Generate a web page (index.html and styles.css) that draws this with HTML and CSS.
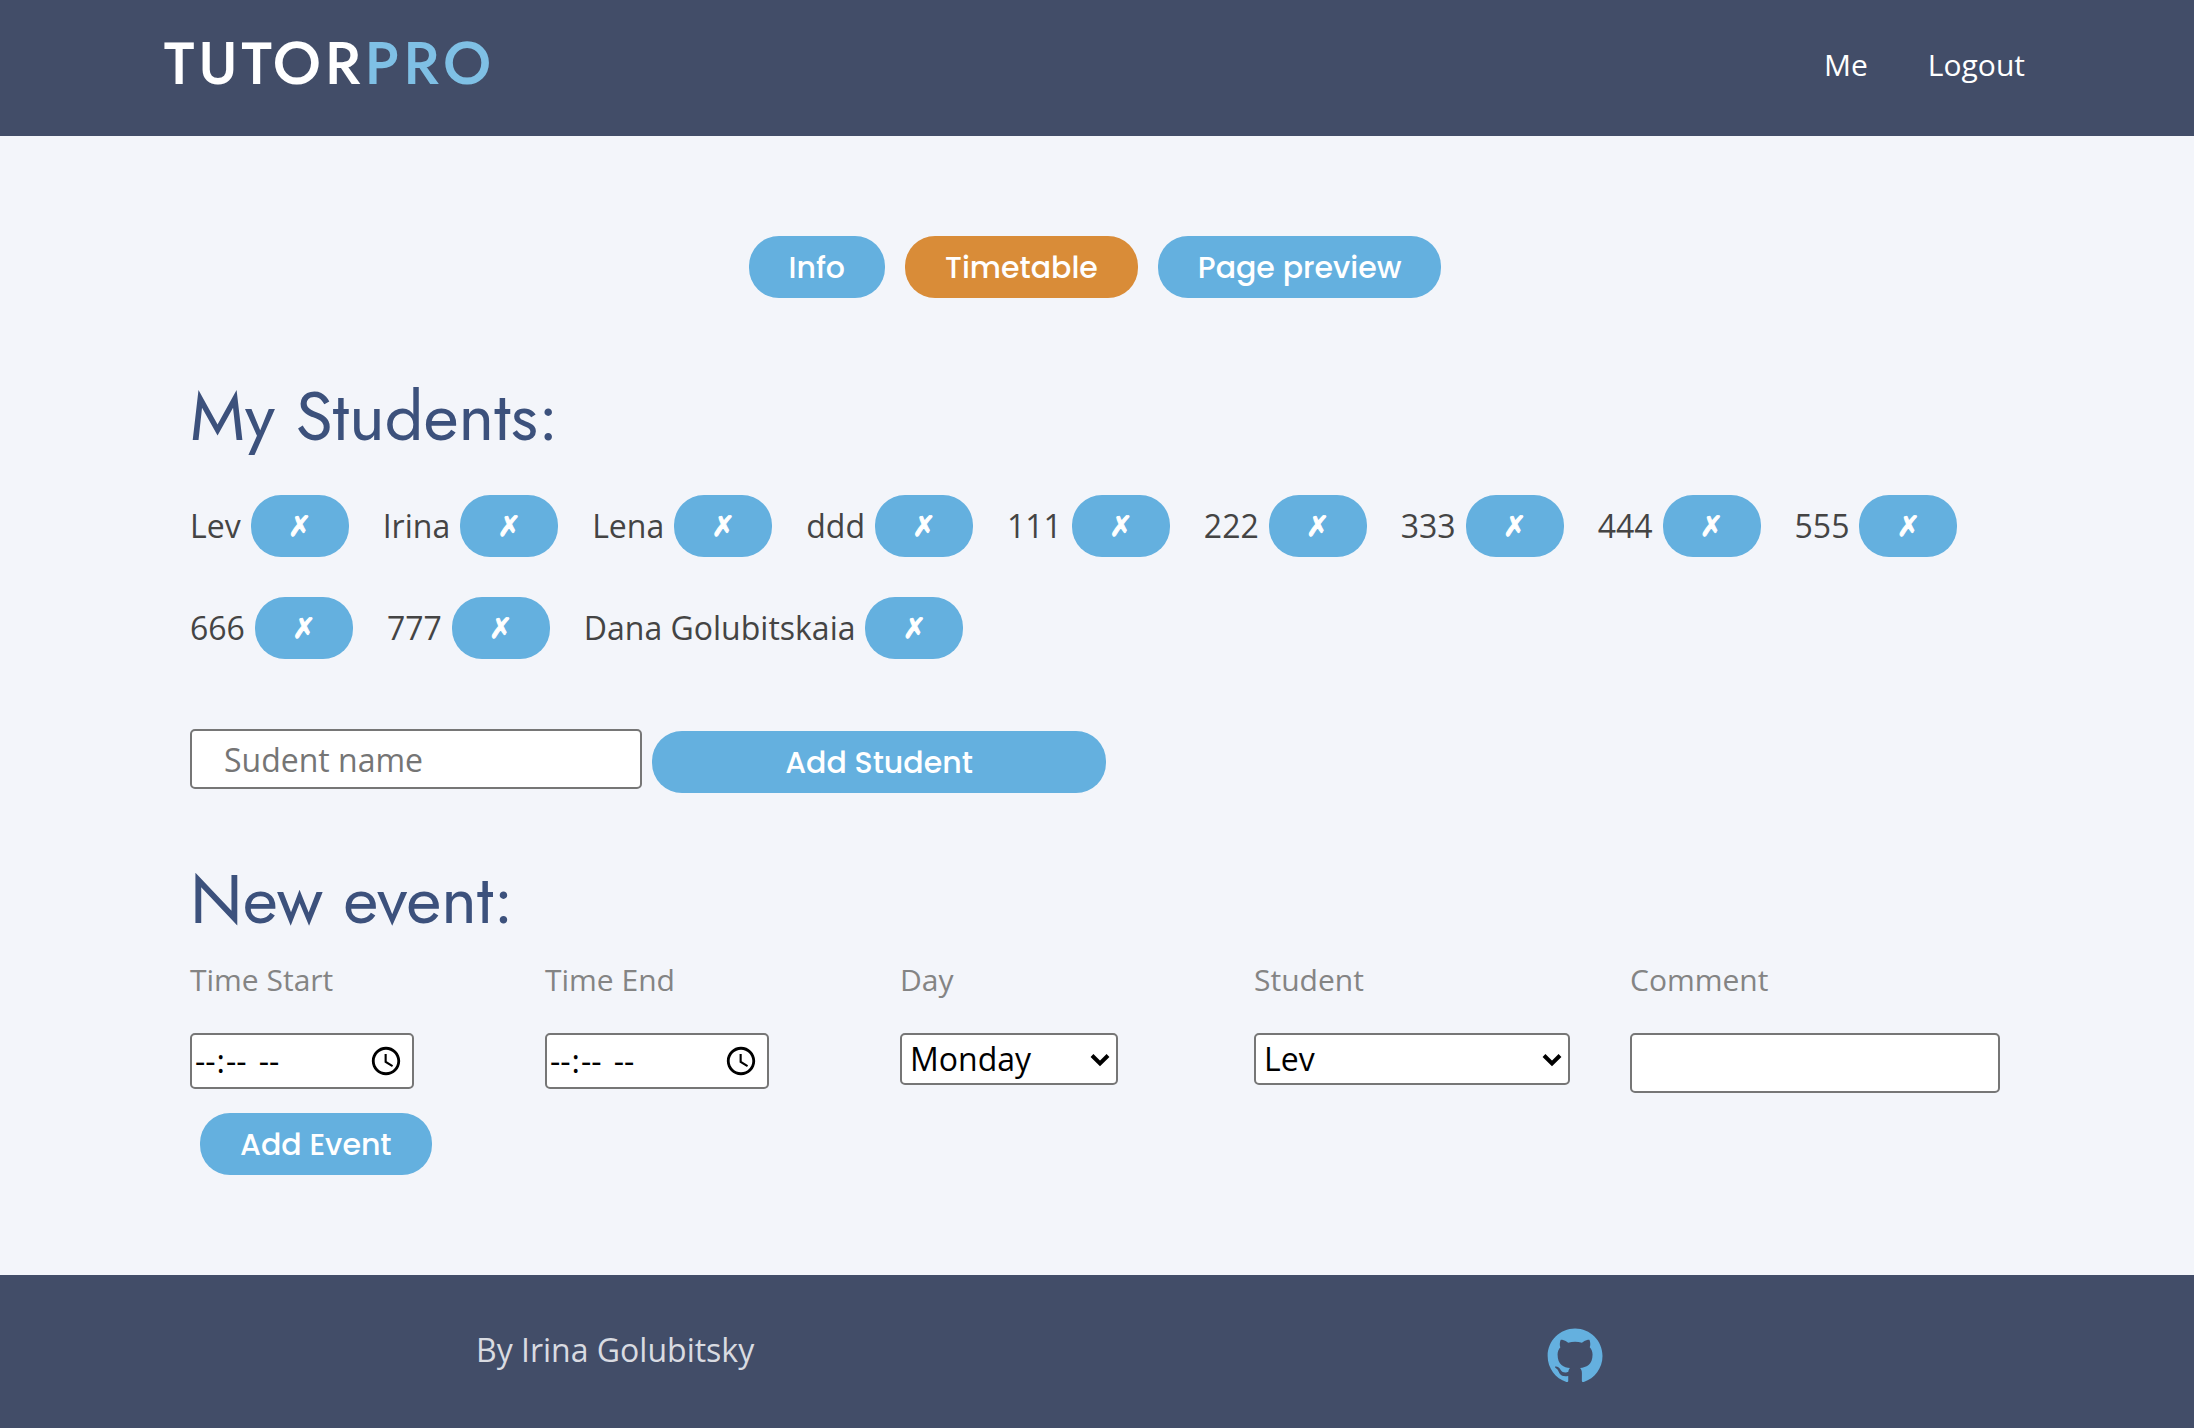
FILE: index.html
```html
<!DOCTYPE html>
<html lang="en">
<head>
<meta charset="utf-8">
<meta name="viewport" content="width=device-width, initial-scale=1">
<title>TutorPro</title>
<link rel="stylesheet" href="styles.css">
</head>
<body>
<header class="header">
  <a class="logo" href="#">TUTOR<span class="logo-accent">PRO</span></a>
  <nav class="nav">
    <a href="#">Me</a>
    <a href="#">Logout</a>
  </nav>
</header>

<main class="main">
  <div class="tabs">
    <button class="btn" type="button">Info</button>
    <button class="btn btn-active" type="button">Timetable</button>
    <button class="btn" type="button">Page preview</button>
  </div>

  <section>
    <h2 class="title">My Students:</h2>
    <ul class="students">
      <li class="student">Lev <button class="btn btn-remove" type="button" aria-label="Remove Lev">✗</button></li>
      <li class="student">Irina <button class="btn btn-remove" type="button" aria-label="Remove Irina">✗</button></li>
      <li class="student">Lena <button class="btn btn-remove" type="button" aria-label="Remove Lena">✗</button></li>
      <li class="student">ddd <button class="btn btn-remove" type="button" aria-label="Remove ddd">✗</button></li>
      <li class="student">111 <button class="btn btn-remove" type="button" aria-label="Remove 111">✗</button></li>
      <li class="student">222 <button class="btn btn-remove" type="button" aria-label="Remove 222">✗</button></li>
      <li class="student">333 <button class="btn btn-remove" type="button" aria-label="Remove 333">✗</button></li>
      <li class="student">444 <button class="btn btn-remove" type="button" aria-label="Remove 444">✗</button></li>
      <li class="student">555 <button class="btn btn-remove" type="button" aria-label="Remove 555">✗</button></li>
      <li class="student">666 <button class="btn btn-remove" type="button" aria-label="Remove 666">✗</button></li>
      <li class="student">777 <button class="btn btn-remove" type="button" aria-label="Remove 777">✗</button></li>
      <li class="student">Dana Golubitskaia <button class="btn btn-remove" type="button" aria-label="Remove Dana Golubitskaia">✗</button></li>
    </ul>
    <form class="add-student">
      <input class="field field-name" type="text" placeholder="Sudent name" aria-label="Student name">
      <button class="btn btn-wide" type="button">Add Student</button>
    </form>
  </section>

  <section>
    <h2 class="title">New event:</h2>
    <form>
      <div class="event">
        <div class="cell">
          <label for="start">Time Start</label>
          <input class="field field-time" type="time" id="start">
        </div>
        <div class="cell">
          <label for="end">Time End</label>
          <input class="field field-time" type="time" id="end">
        </div>
        <div class="cell">
          <label for="day">Day</label>
          <div class="pick pick-day">
            <select class="field field-select" id="day">
              <option>Monday</option><option>Tuesday</option><option>Wednesday</option><option>Thursday</option><option>Friday</option><option>Saturday</option><option>Sunday</option>
            </select>
            <svg class="arrow" viewBox="0 0 20 14" aria-hidden="true"><path d="M2 2.500 10 10.500 18 2.500"/></svg>
          </div>
        </div>
        <div class="cell">
          <label for="student">Student</label>
          <div class="pick pick-student">
            <select class="field field-select" id="student">
              <option>Lev</option><option>Irina</option><option>Lena</option><option>Dana Golubitskaia</option>
            </select>
            <svg class="arrow" viewBox="0 0 20 14" aria-hidden="true"><path d="M2 2.500 10 10.500 18 2.500"/></svg>
          </div>
        </div>
        <div class="cell">
          <label for="comment">Comment</label>
          <input class="field field-comment" type="text" id="comment">
        </div>
      </div>
      <button class="btn btn-event" type="button">Add Event</button>
    </form>
  </section>
</main>

<footer class="footer">
  <p class="author">By Irina Golubitsky</p>
  <a class="github" href="#" aria-label="GitHub">
    <svg viewBox="0 0 24 24" width="66" height="66" aria-hidden="true"><path fill="currentColor" d="M12.026 2c-5.509 0-9.974 4.465-9.974 9.974 0 4.406 2.857 8.145 6.821 9.465.499.09.679-.217.679-.481 0-.237-.008-.865-.011-1.696-2.775.602-3.361-1.338-3.361-1.338-.452-1.152-1.107-1.459-1.107-1.459-.905-.619.069-.605.069-.605 1.002.07 1.527 1.028 1.527 1.028.89 1.524 2.336 1.084 2.902.829.091-.645.351-1.085.635-1.334-2.214-.251-4.542-1.107-4.542-4.93 0-1.087.389-1.979 1.024-2.675-.101-.253-.446-1.268.099-2.64 0 0 .837-.269 2.742 1.021a9.582 9.582 0 0 1 2.496-.336 9.554 9.554 0 0 1 2.496.336c1.906-1.291 2.742-1.021 2.742-1.021.545 1.372.203 2.387.099 2.64.64.696 1.024 1.587 1.024 2.675 0 3.833-2.33 4.675-4.552 4.922.355.308.675.916.675 1.846 0 1.334-.012 2.41-.012 2.737 0 .267.178.577.687.479C19.146 20.115 22 16.379 22 11.974 22 6.465 17.535 2 12.026 2z"/></svg>
  </a>
</footer>
</body>
</html>
```
FILE: styles.css
```css
*, *::before, *::after { box-sizing: border-box; }

body {
  margin: 0;
  min-height: 100vh;
  display: flex;
  flex-direction: column;
  background: #f3f5fa;
  color: #444;
  font: 32px/48px "Open Sans", sans-serif;
}

a { text-decoration: none; }
p, h2, ul { margin: 0; padding: 0; }

.header {
  display: flex;
  justify-content: space-between;
  align-items: flex-start;
  padding: 28px 169px 36px 164px;
  background: #424d68;
}

.logo {
  color: #fff;
  font: 500 60px/72px Jost, Lato, sans-serif;
  letter-spacing: 4px;
}

.logo-accent { color: #7fc0e5; }

.nav {
  display: flex;
  gap: 60px;
  padding-top: 13px;
  font-size: 30px;
}

.nav a { color: #fff; }

.main {
  flex: 1;
  padding: 100px 194px 100px 190px;
}

.btn {
  height: 62px;
  padding: 0 40px;
  border: 0;
  border-radius: 30px;
  background: #64b0df;
  color: #fff;
  font: 500 30px/64px Poppins, Inter, sans-serif;
}

.btn-active { background: #d98c38; }

.tabs {
  display: flex;
  justify-content: center;
  gap: 20px;
  margin-bottom: 77px;
}

.title {
  color: #3c517c;
  font: 400 68px/84px Jost, Lato, sans-serif;
}

.students {
  display: flex;
  flex-wrap: wrap;
  gap: 40px 34px;
  margin: 36px 0 70px;
  list-style: none;
}

.student {
  display: flex;
  align-items: center;
  gap: 10px;
}

.btn-remove {
  width: 98px;
  padding: 2px 0 0;
  font: 700 28px/60px "DejaVu Sans", sans-serif;
  -webkit-text-stroke: 1px #fff;
}

.field {
  border: 2px solid #767676;
  border-radius: 5px;
  background: #fff;
  color: #000;
  font: 32px/48px "Open Sans", sans-serif;
}

.add-student {
  display: flex;
  align-items: flex-end;
  gap: 10px;
  margin-bottom: 65px;
}

.field-name {
  width: 452px;
  height: 60px;
  margin-bottom: 4px;
  padding: 0 32px;
}

.field-name::placeholder { color: #757575; opacity: 1; }

.btn-wide { width: 454px; }

.event {
  display: grid;
  grid-template-columns: 355fr 355fr 354fr 376fr 370fr;
  margin: 14px 0 20px;
}

.cell {
  display: flex;
  flex-direction: column;
  align-items: flex-start;
  gap: 29px;
}

.cell label {
  color: #848484;
  font-size: 30px;
}

.field-time {
  width: 224px;
  height: 56px;
  padding: 0 6px 0 2px;
}

.field-time::-webkit-datetime-edit-ampm-field { margin-left: 6px; }

.pick { position: relative; height: 52px; }
.pick-day { width: 218px; }
.pick-student { width: 316px; }

.field-select {
  width: 100%;
  height: 52px;
  padding: 0 8px;
  appearance: none;
}

.arrow {
  position: absolute;
  right: 8px;
  top: 20px;
  width: 20px;
  height: 14px;
  fill: none;
  stroke: #000;
  stroke-width: 4;
  pointer-events: none;
}

.field-comment { width: 100%; height: 60px; }

.btn-event { display: block; margin-left: 10px; }

.footer {
  display: grid;
  grid-template-columns: 1071fr 647fr;
  padding: 48px 0 40px 476px;
  background: #424d68;
}

.author { color: #d9dbe1; padding-top: 3px; }

.github {
  display: flex;
  height: 66px;
  margin-left: -5px;
  color: #64b0df;
}
```
